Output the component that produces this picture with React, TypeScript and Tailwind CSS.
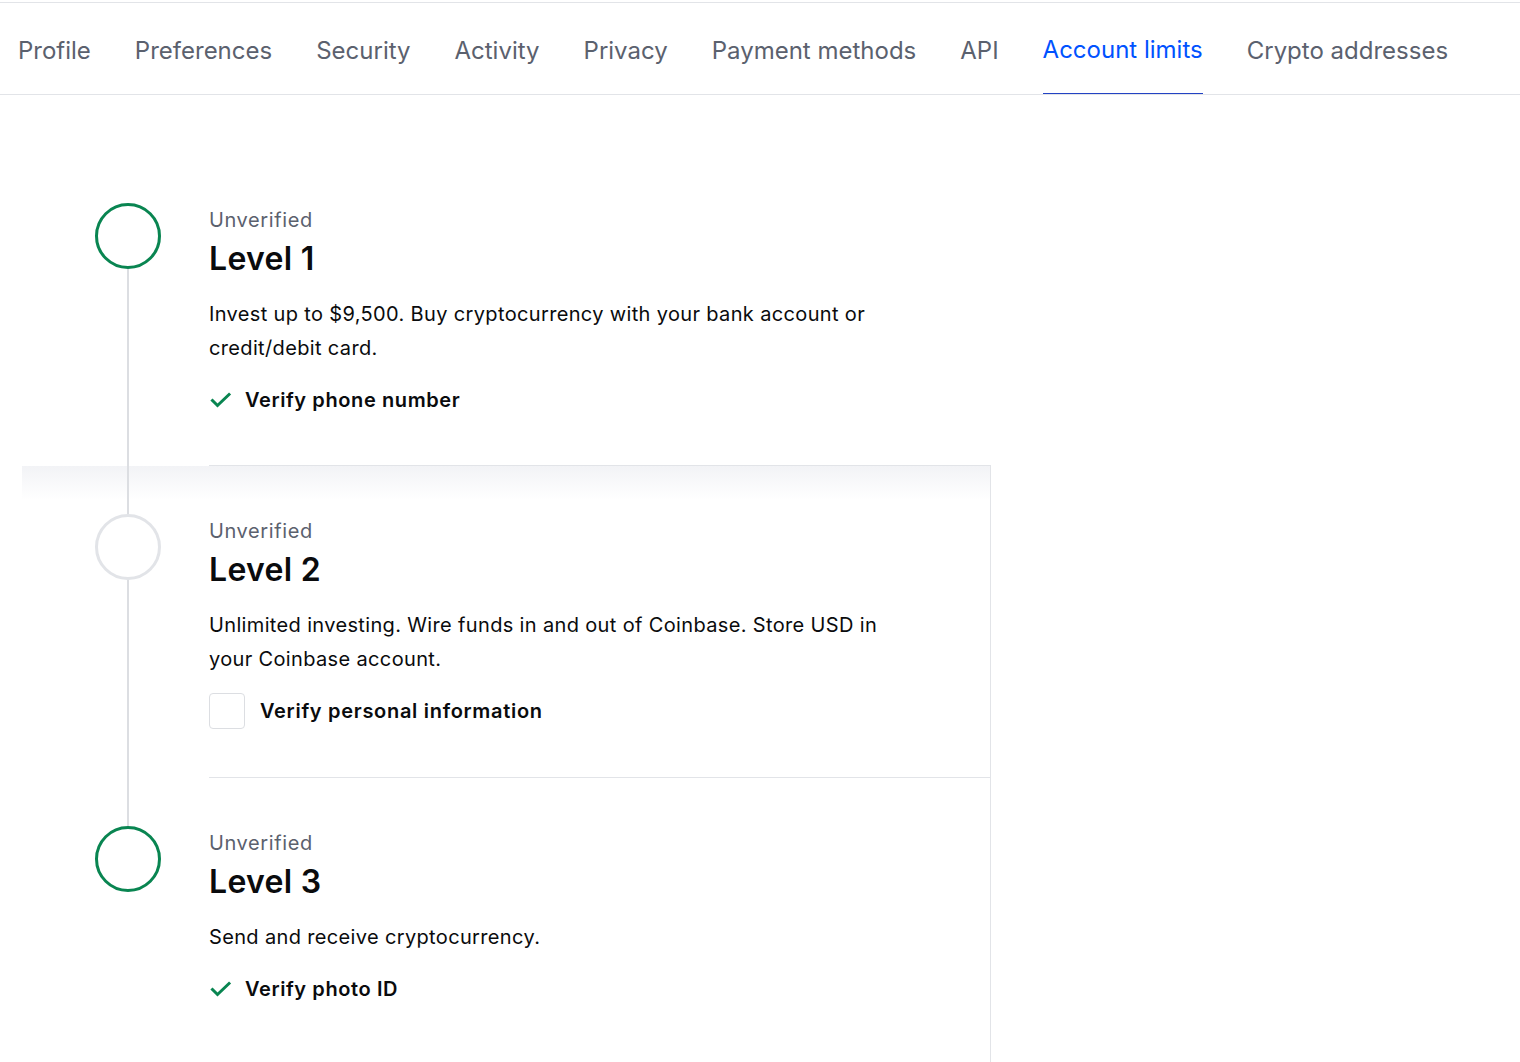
import React from 'react';

const tabs = [
  'Profile',
  'Preferences',
  'Security',
  'Activity',
  'Privacy',
  'Payment methods',
  'API',
  'Account limits',
  'Crypto addresses',
];

type Level = {
  name: string;
  description: string;
  task: string;
  done: boolean;
  active: boolean;
};

const levels: Level[] = [
  {
    name: 'Level 1',
    description:
      'Invest up to $9,500. Buy cryptocurrency with your bank account or credit/debit card.',
    task: 'Verify phone number',
    done: true,
    active: true,
  },
  {
    name: 'Level 2',
    description:
      'Unlimited investing. Wire funds in and out of Coinbase. Store USD in your Coinbase account.',
    task: 'Verify personal information',
    done: false,
    active: false,
  },
  {
    name: 'Level 3',
    description: 'Send and receive cryptocurrency.',
    task: 'Verify photo ID',
    done: true,
    active: true,
  },
];

const Check = () => (
  <svg width="24" height="24" viewBox="0 0 24 24" fill="none">
    <path d="M3.5 12.5l5 5L20 6.5" stroke="#098551" strokeWidth="3" strokeLinecap="square" />
  </svg>
);

const App = () => {
  return (
    <div className="min-h-screen bg-white pt-[2px] font-['Inter','Liberation_Sans',sans-serif] text-[#0a0b0d]">
      <nav className="flex h-[93px] items-stretch gap-[44px] border-t border-b border-[#e2e4e8] pl-[18px]">
        {tabs.map((tab) => {
          const active = tab === 'Account limits';
          return (
            <div
              key={tab}
              className={
                active
                  ? 'flex items-center border-b border-[#2343c4] pt-[4px] text-[24px] text-[#0052ff]'
                  : 'flex items-center pt-[4px] text-[24px] text-[#5b616e]'
              }
            >
              {tab}
            </div>
          );
        })}
      </nav>

      <section className="pt-[59px]">
        {levels.map((level, i) => {
          const first = i === 0;
          const last = i === levels.length - 1;
          return (
            <div key={level.name} className="relative flex pl-[95px]">
              {i === 1 && (
                <div className="absolute left-[22px] top-[1px] h-[34px] w-[968px] bg-linear-to-b from-[#f2f3f6] to-white/0" />
              )}
              <div className="relative flex w-[66px] flex-col items-center">
                <div className={first ? 'h-[49px] w-[2px]' : 'h-[49px] w-[2px] bg-[#dcdee2]'} />
                <div
                  className={
                    level.active
                      ? 'h-[66px] w-[66px] rounded-full border-[3px] border-[#098551]'
                      : 'h-[66px] w-[66px] rounded-full border-[3px] border-[#e2e4e8]'
                  }
                />
                {!last && <div className="w-[2px] flex-1 bg-[#dcdee2]" />}
              </div>

              <div
                className={
                  first
                    ? 'relative ml-[48px] w-[782px] pt-[52px] pb-[47px]'
                    : last
                      ? 'relative ml-[48px] w-[782px] border-t border-r border-[#e2e4e8] pt-[51px] pb-[80px]'
                      : 'relative ml-[48px] w-[782px] border-t border-r border-[#e2e4e8] pt-[51px] pb-[48px]'
                }
              >
                <div className="text-[20px] leading-[28px] tracking-[0.6px] text-[#5b616e]">Unverified</div>
                <h2 className="mt-[3px] text-[32px] font-semibold leading-[44px] tracking-[0.3px]">{level.name}</h2>
                <p className="mt-[16px] max-w-[700px] text-[20px] leading-[34px] tracking-[0.35px]">
                  {level.description}
                </p>
                <div className="mt-[17px] flex h-[36px] items-center">
                  {level.done ? (
                    <>
                      <Check />
                      <span className="ml-[12px] text-[20px] font-semibold tracking-[0.6px]">{level.task}</span>
                    </>
                  ) : (
                    <>
                      <div className="h-[36px] w-[36px] rounded-[4px] border border-[#dcdee2]" />
                      <span className="ml-[15px] text-[20px] font-semibold tracking-[0.7px]">{level.task}</span>
                    </>
                  )}
                </div>
              </div>
            </div>
          );
        })}
      </section>
    </div>
  );
};

export default App;
